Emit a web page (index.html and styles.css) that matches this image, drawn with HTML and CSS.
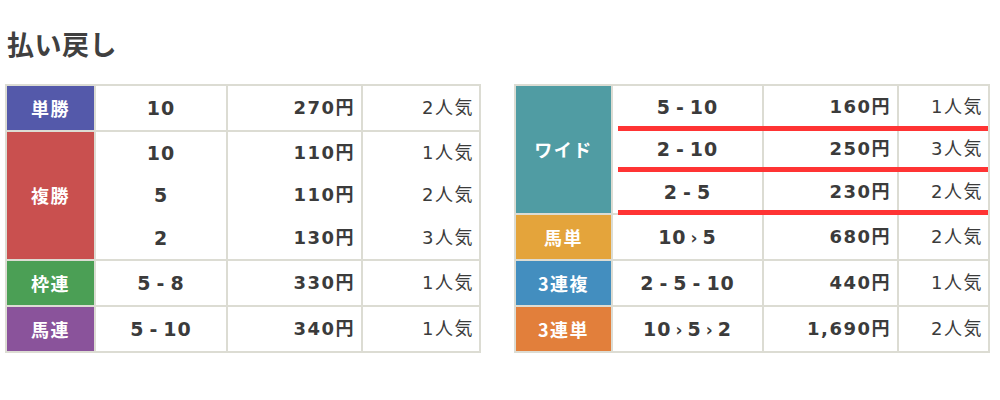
FILE: index.html
```html
<!DOCTYPE html>
<html lang="ja">
<head>
<meta charset="utf-8">
<title>払い戻し</title>
<link rel="stylesheet" href="styles.css">
</head>
<body>
<div class="page">
  <h2 class="title">払い戻し</h2>
  <div class="tables">
    <table class="pay pay-left">
      <colgroup><col class="c-label"><col class="c-horse"><col class="c-yen"><col class="c-pop"></colgroup>
      <tr>
        <th class="lbl tansho">単勝</th>
        <td class="horse"><div class="ln">10</div></td>
        <td class="yen"><div class="ln">270円</div></td>
        <td class="pop"><div class="ln">2人気</div></td>
      </tr>
      <tr>
        <th class="lbl fukusho">複勝</th>
        <td class="horse"><div class="ln sub">10</div><div class="ln sub">5</div><div class="ln sub">2</div></td>
        <td class="yen"><div class="ln sub">110円</div><div class="ln sub">110円</div><div class="ln sub">130円</div></td>
        <td class="pop"><div class="ln sub">1人気</div><div class="ln sub">2人気</div><div class="ln sub">3人気</div></td>
      </tr>
      <tr>
        <th class="lbl wakuren">枠連</th>
        <td class="horse"><div class="ln">5<span class="d">-</span>8</div></td>
        <td class="yen"><div class="ln">330円</div></td>
        <td class="pop"><div class="ln">1人気</div></td>
      </tr>
      <tr>
        <th class="lbl umaren">馬連</th>
        <td class="horse"><div class="ln">5<span class="d">-</span>10</div></td>
        <td class="yen"><div class="ln">340円</div></td>
        <td class="pop"><div class="ln">1人気</div></td>
      </tr>
    </table>

    <div class="marked">
      <table class="pay pay-right">
        <colgroup><col class="c-label"><col class="c-horse"><col class="c-yen"><col class="c-pop"></colgroup>
        <tr>
          <th class="lbl wide">ワイド</th>
          <td class="horse"><div class="ln sub">5<span class="d">-</span>10</div><div class="ln sub">2<span class="d">-</span>10</div><div class="ln sub">2<span class="d">-</span>5</div></td>
          <td class="yen"><div class="ln sub">160円</div><div class="ln sub">250円</div><div class="ln sub">230円</div></td>
          <td class="pop"><div class="ln sub">1人気</div><div class="ln sub">3人気</div><div class="ln sub">2人気</div></td>
        </tr>
        <tr>
          <th class="lbl umatan">馬単</th>
          <td class="horse"><div class="ln">10<span class="a">›</span>5</div></td>
          <td class="yen"><div class="ln">680円</div></td>
          <td class="pop"><div class="ln">2人気</div></td>
        </tr>
        <tr>
          <th class="lbl sanfuku">3連複</th>
          <td class="horse"><div class="ln">2<span class="d">-</span>5<span class="d">-</span>10</div></td>
          <td class="yen"><div class="ln">440円</div></td>
          <td class="pop"><div class="ln">1人気</div></td>
        </tr>
        <tr>
          <th class="lbl santan">3連単</th>
          <td class="horse"><div class="ln">10<span class="a">›</span>5<span class="a">›</span>2</div></td>
          <td class="yen"><div class="ln">1,690円</div></td>
          <td class="pop"><div class="ln">2人気</div></td>
        </tr>
      </table>
      <div class="mark m1"></div>
      <div class="mark m2"></div>
      <div class="mark m3"></div>
    </div>
  </div>
</div>
</body>
</html>
```

FILE: styles.css
```css
html, body {
  margin: 0;
  padding: 0;
  background: #ffffff;
}

body {
  font-family: "DejaVu Sans", "Noto Sans CJK JP", sans-serif;
  color: #3b3b3b;
}

.page {
  padding: 0 0 0 5px;
}

.title {
  margin: 24px 0 0 2px;
  font-family: "Noto Sans CJK JP", sans-serif;
  font-size: 27px;
  line-height: 40px;
  font-weight: 700;
  color: #404040;
  letter-spacing: 0.5px;
}

.tables {
  display: flex;
  align-items: flex-start;
  gap: 33px;
  margin-top: 20px;
}

.pay {
  border-collapse: collapse;
  table-layout: fixed;
  border: 2px solid #dcdcd3;
}

.pay th,
.pay td {
  border: 2px solid #dcdcd3;
  padding: 0;
  vertical-align: middle;
}

.pay-left { width: 474px; }
.pay-left .c-label { width: 89px; }
.pay-left .c-horse { width: 132px; }
.pay-left .c-yen { width: 135px; }
.pay-left .c-pop { width: 118px; }

.pay-right { width: 474px; }
.pay-right .c-label { width: 97px; }
.pay-right .c-horse { width: 151px; }
.pay-right .c-yen { width: 135px; }
.pay-right .c-pop { width: 91px; }

.lbl {
  color: #ffffff;
  font-family: "Noto Sans CJK JP", sans-serif;
  font-size: 18px;
  font-weight: 700;
  text-align: center;
  letter-spacing: 1.5px;
}

.tansho { background: #5459aa; }
.fukusho { background: #c9504f; }
.wakuren { background: #4b9f55; }
.umaren { background: #8a539b; }
.wide { background: #509ca3; }
.umatan { background: #e4a43b; }
.sanfuku { background: #438ebf; }
.santan { background: #e27f3b; }

.ln {
  height: 44px;
  line-height: 44px;
  white-space: nowrap;
}

.ln.sub {
  height: 42.33px;
  line-height: 42px;
}

.horse {
  text-align: center;
  font-size: 19px;
  font-weight: 700;
  letter-spacing: 1px;
}

.horse .d {
  display: inline-block;
  margin: 0 5px;
}

.horse .a {
  display: inline-block;
  margin: 0 4px;
  font-size: 17px;
}

.yen {
  text-align: right;
  padding-right: 6px !important;
  font-size: 18px;
  font-weight: 700;
  letter-spacing: 1.5px;
}

.pop {
  text-align: right;
  padding-right: 5px !important;
  font-size: 18px;
  font-weight: 400;
  letter-spacing: 1.5px;
}

.marked {
  position: relative;
}

.mark {
  position: absolute;
  left: 104px;
  right: 2px;
  height: 5px;
  background: #ff3434;
}

.m1 { top: 42px; }
.m2 { top: 83px; }
.m3 { top: 126px; }
```
